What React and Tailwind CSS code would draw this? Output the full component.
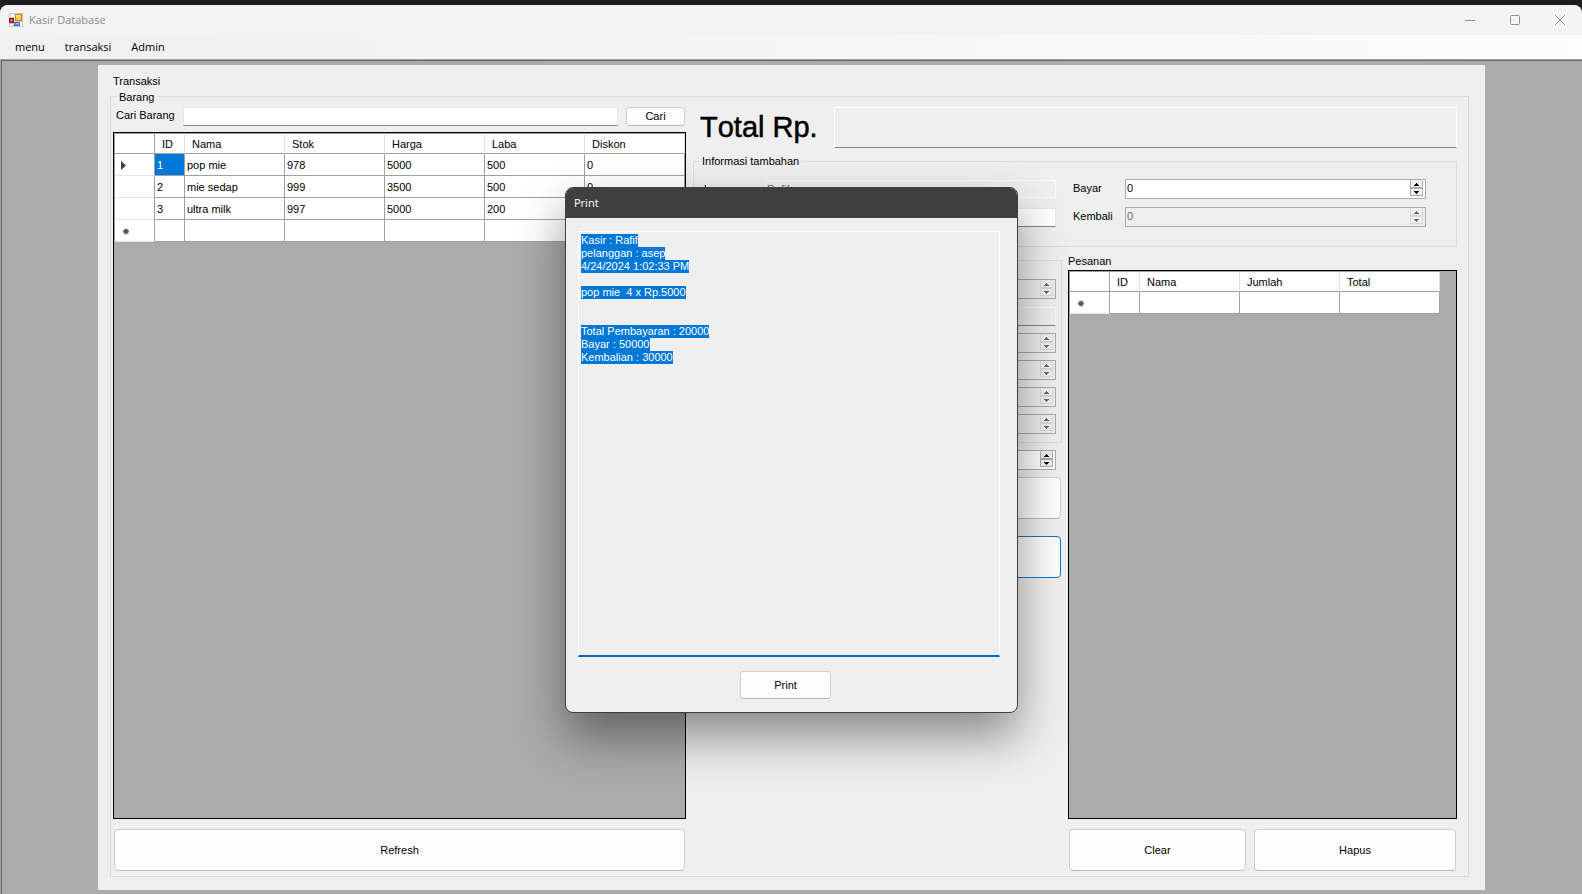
import React from "react";

const BARANG_COLUMNS = ["Nama", "Stok", "Harga", "Laba", "Diskon"];
const BARANG_ROWS = [
  ["1", "pop mie", "978", "5000", "500", "0"],
  ["2", "mie sedap", "999", "3500", "500", "0"],
  ["3", "ultra milk", "997", "5000", "200", "0"],
];
const PESANAN_COLUMNS = ["Nama", "Jumlah", "Total"];

const RECEIPT = [
  "Kasir : Rafif",
  "pelanggan : asep",
  "4/24/2024 1:02:33 PM",
  "",
  "pop mie  4 x Rp.5000",
  "",
  "",
  "Total Pembayaran : 20000",
  "Bayar : 50000",
  "Kembalian : 30000",
];

function AppIcon() {
  return (
    <svg className="size-[14px] shrink-0" viewBox="0 0 14 14" aria-hidden="true">
      <rect width="14" height="14" fill="#c4c4c4" />
      <rect x="1" y="1" width="4" height="3" fill="#fafafa" />
      <rect x="1" y="11" width="3" height="2" fill="#fafafa" />
      <rect x="5" y="1" width="1" height="12" fill="#e6e6e6" />
      <rect x="11" y="9" width="2" height="4" fill="#fafafa" />
      <rect x="6.5" y="1.5" width="6" height="6" fill="#f7cb3c" stroke="#c09010" />
      <rect x="7" y="2" width="4" height="2" fill="#fde487" />
      <rect x="0.5" y="5.5" width="4" height="4" fill="#d03030" stroke="#a01515" />
      <rect x="2" y="6" width="1" height="2" fill="#f0a0a0" />
      <rect x="5.5" y="9.5" width="5" height="3" fill="#5a94ea" stroke="#3f74cc" />
      <rect x="7" y="10" width="3" height="1" fill="#9cc0f5" />
    </svg>
  );
}

function Button({ children, className = "", focused = false }) {
  return (
    <button
      type="button"
      className={`rounded border bg-[#fdfdfd] text-center ${
        focused ? "border-[#0078d4]" : "border-[#d0d0d0] border-b-[#bababa]"
      } ${className}`}
    >
      {children}
    </button>
  );
}

function TextBox({ id, disabled = false, className = "", ...rest }) {
  return (
    <input
      id={id}
      type="text"
      disabled={disabled}
      className={`min-w-0 flex-1 border px-px outline-none ${
        disabled
          ? "border-[#f8f8f8] bg-[#efefef] text-[#6d6d6d]"
          : "border-[#e8e8e8] border-b-[#868686] bg-white"
      } ${className}`}
      {...rest}
    />
  );
}

function SpinButton({ up = false, disabled }) {
  return (
    <button
      type="button"
      tabIndex={-1}
      disabled={disabled}
      aria-label={up ? "Naik" : "Turun"}
      className={`flex flex-1 items-center justify-center border bg-[#f0f0f0] ${
        disabled ? "border-[#d9d9d9] text-[#6d6d6d]" : "border-[#ababab] text-black"
      } ${up ? "border-t-transparent" : ""}`}
    >
      <svg className="h-[3px] w-[5px]" viewBox="0 0 5 3" shapeRendering="crispEdges" aria-hidden="true">
        <path d={up ? "M2 0h1v1h1v1h1v1H0V2h1V1h1z" : "M0 0h5v1H4v1H3v1H2V2H1V1H0z"} fill="currentColor" />
      </svg>
    </button>
  );
}

function NumberBox({ id, disabled = false, value = "" }) {
  return (
    <div
      className={`flex h-5 min-w-0 flex-1 border border-[#ababab] ${disabled ? "bg-[#efefef]" : "bg-white"}`}
    >
      <input
        id={id}
        type="number"
        disabled={disabled}
        defaultValue={value}
        className={`min-w-0 flex-1 px-px pb-px outline-none [appearance:textfield] ${
          disabled ? "text-[#6d6d6d]" : "text-black"
        }`}
      />
      <div className={`flex w-4 flex-col border-r border-b p-px pt-0 ${disabled ? "border-[#efefef]" : "border-white"}`}>
        <SpinButton up disabled={disabled} />
        <SpinButton disabled={disabled} />
      </div>
    </div>
  );
}

function DataGrid({ label, columns, rows }) {
  return (
    <div className="min-h-0 flex-1 overflow-hidden border border-black bg-[#ababab]">
      <table
        aria-label={label}
        className="w-px table-fixed border-separate border-spacing-0 border-t border-l border-[#a0a0a0] bg-white text-left"
      >
        <thead>
          <tr className="h-5">
            <td className="w-10 min-w-10 border-r border-b border-[#a0a0a0] p-0" />
            <th className="w-[30px] border-r border-b border-[#a0a0a0] border-r-[#e3e3e3] p-0 pt-[2px] pl-[7px] font-normal">
              ID
            </th>
            {columns.map((name) => (
              <th
                key={name}
                className="w-[100px] border-r border-b border-[#a0a0a0] border-r-[#e3e3e3] p-0 pt-[2px] pl-[7px] font-normal"
              >
                {name}
              </th>
            ))}
          </tr>
        </thead>
        <tbody>
          {rows.map((row, r) => (
            <tr key={row[0]} className="h-[22px]">
              <td className="border-r border-b border-[#a0a0a0] border-b-[#e3e3e3] p-0 pt-[2px] pl-[6px]">
                {r === 0 && (
                  <svg className="h-[9px] w-[5px]" viewBox="0 0 5 9" aria-hidden="true">
                    <path d="M0 0l5 4.5L0 9z" fill="#404040" />
                  </svg>
                )}
              </td>
              {row.map((cell, c) => (
                <td
                  key={c}
                  className={`border-r border-b border-[#a0a0a0] p-0 pt-[2px] pl-[2px] ${
                    r === 0 && c === 0 ? "bg-[#0078d7] text-white" : ""
                  }`}
                >
                  {cell}
                </td>
              ))}
            </tr>
          ))}
          <tr className="h-[22px]">
            <td className="border-r border-b border-[#a0a0a0] border-b-[#e3e3e3] p-0 pt-[2px] pl-2">
              <svg className="h-[7px] w-[6px]" viewBox="0 0 6 7" aria-hidden="true">
                <circle cx="3" cy="3.5" r="2.7" fill="#8a8a8a" />
                <circle cx="3" cy="3.5" r="1.8" fill="#404040" />
                <path d="M3 0.5v6M0 3.5h6M1 1.5l4 4M5 1.5l-4 4" stroke="#606060" strokeWidth="0.8" />
              </svg>
            </td>
            <td className="border-r border-b border-[#a0a0a0] p-0" />
            {columns.map((name) => (
              <td key={name} className="border-r border-b border-[#a0a0a0] p-0" />
            ))}
          </tr>
        </tbody>
      </table>
    </div>
  );
}

function FormRow({ id, label, children }) {
  return (
    <div className="flex h-5 items-center">
      <label htmlFor={id} className="w-[61px] shrink-0">
        {label}
      </label>
      {children}
    </div>
  );
}

function TitleBar() {
  return (
    <header className="flex h-[30px] items-center bg-[#f3f3f3] pl-[9px] text-[#8c8c8c]">
      <AppIcon />
      <h1 className="ml-[6px] flex-1 pb-[2px] font-['Open_Sans',sans-serif] text-[11px]">Kasir Database</h1>
      <div className="flex">
        <button type="button" aria-label="Minimize" className="flex h-7 w-[45px] items-center justify-center">
          <svg className="size-[10px]" viewBox="0 0 10 10" aria-hidden="true">
            <path d="M0 5.5h10" stroke="currentColor" />
          </svg>
        </button>
        <button type="button" aria-label="Maximize" className="flex h-7 w-[45px] items-center justify-center">
          <svg className="size-[10px]" viewBox="0 0 10 10" fill="none" aria-hidden="true">
            <rect x="0.5" y="0.5" width="9" height="9" rx="1" stroke="currentColor" />
          </svg>
        </button>
        <button type="button" aria-label="Close" className="flex h-7 w-[45px] items-center justify-center">
          <svg className="size-[10px]" viewBox="0 0 10 10" aria-hidden="true">
            <path d="M0 0l10 10M10 0L0 10" stroke="currentColor" />
          </svg>
        </button>
      </div>
    </header>
  );
}

function PrintDialog() {
  return (
    <div className="absolute inset-0 flex items-start justify-center pt-[187px] pl-px">
      <div
        role="dialog"
        aria-labelledby="print-title"
        className="w-[453px] overflow-hidden rounded-lg border border-[#3f3f3f] bg-[#efefef] shadow-[0_24px_48px_rgba(0,0,0,0.42)]"
      >
        <h2
          id="print-title"
          className="h-[30px] bg-[#3f3f3f] pl-2 font-['Open_Sans',sans-serif] text-[11px] leading-[30px] text-white"
        >
          Print
        </h2>
        <div className="flex flex-col items-center px-3 pt-[13px] pb-[13px]">
          <div
            role="textbox"
            aria-label="Struk"
            aria-multiline="true"
            tabIndex={0}
            className="mr-[5px] h-[426px] self-stretch border border-b-2 border-white border-b-[#0067c0] pt-[2px] pl-[2px] whitespace-pre text-white outline-none"
          >
            {RECEIPT.map((line, i) => (
              <p key={i} className="h-[13px] leading-[13px]">
                <span className="inline-block bg-[#0078d7]">{line}</span>
              </p>
            ))}
          </div>
          <Button className="mt-[14px] mr-3 h-7 w-[91px]">Print</Button>
        </div>
      </div>
    </div>
  );
}

export default function App() {
  return (
    <div className="relative flex min-h-screen flex-col bg-[#1f1f1f] pt-[5px] font-['Liberation_Sans',Arial,sans-serif] text-[11px] leading-[13px] text-black">
      <div className="flex flex-1 flex-col overflow-hidden rounded-t-lg bg-[#ababab]">
        <TitleBar />
        <nav className="flex h-6 items-center gap-5 bg-linear-to-r from-[#f0f0f0] to-[#fcfcfc] pb-[2px] pl-[15px] font-['Open_Sans',sans-serif]">
          <a href="#menu">menu</a>
          <a href="#transaksi">transaksi</a>
          <a href="#admin">Admin</a>
        </nav>
        <div className="flex flex-1 border-t border-l border-[#a0a0a0]">
          <div className="flex flex-1 border-t border-l border-[#696969]">
            <main className="mt-1 mr-[97px] mb-1 ml-24 flex min-w-0 flex-1 flex-col bg-[#efefef] pt-[10px] pr-4 pb-[13px] pl-3">
              <h2 className="pb-px pl-[3px]">Transaksi</h2>
              <fieldset className="grid min-w-0 flex-1 grid-cols-[573fr_764fr] gap-[7px] border border-[#dcdcdc] pt-[3px] pr-[11px] pb-[5px] pl-[2px]">
                <legend className="ml-[4px] px-[2px] pt-[2px]">Barang</legend>

                <section className="flex min-w-0 flex-col">
                  <form className="mr-px mb-[6px] flex h-[19px] items-stretch gap-2">
                    <label htmlFor="cari" className="w-[62px] shrink-0 pt-[2px] pl-[3px] whitespace-nowrap">
                      Cari Barang
                    </label>
                    <TextBox id="cari" />
                    <Button className="w-[59px]">Cari</Button>
                  </form>
                  <DataGrid label="Barang" columns={BARANG_COLUMNS} rows={BARANG_ROWS} />
                  <Button className="mx-px mt-[10px] h-[42px]">Refresh</Button>
                </section>

                <section className="flex min-w-0 flex-col">
                  <div className="flex h-[41px] items-center">
                    <label
                      htmlFor="total"
                      className="w-[141px] pb-[2px] pl-[7px] text-[29px] leading-8 [-webkit-text-stroke:0.5px_black] [font-kerning:none]"
                    >
                      Total Rp.
                    </label>
                    <input
                      id="total"
                      type="text"
                      readOnly
                      className="h-full min-w-0 flex-1 border border-white border-b-[#868686] bg-[#efefef] px-2 text-[29px] outline-none"
                    />
                  </div>

                  <fieldset className="mt-[6px] flex min-w-0 border border-[#dcdcdc] pt-[10px] pr-[30px] pb-[19px] pl-[10px]">
                    <legend className="-ml-[4px] px-[2px] pt-px pb-px">Informasi tambahan</legend>
                    <div className="flex min-w-0 flex-1 flex-col gap-2">
                      <FormRow id="karyawan" label="karyawan">
                        <TextBox id="karyawan" disabled defaultValue="Rafif" className="h-[18px]" />
                      </FormRow>
                      <FormRow id="pelanggan" label="pelanggan">
                        <TextBox id="pelanggan" defaultValue="asep" className="h-[19px]" />
                      </FormRow>
                    </div>
                    <div className="ml-[17px] flex w-[353px] flex-col gap-2">
                      <div className="flex">
                        <label htmlFor="bayar" className="w-[52px] pt-[3px]">
                          Bayar
                        </label>
                        <NumberBox id="bayar" value="0" />
                      </div>
                      <div className="flex">
                        <label htmlFor="kembali" className="w-[52px] pt-[3px]">
                          Kembali
                        </label>
                        <NumberBox id="kembali" value="0" disabled />
                      </div>
                    </div>
                  </fieldset>

                  <div className="mt-[7px] grid flex-1 grid-cols-[369fr_389fr] gap-[6px]">
                    <div className="flex min-w-0 flex-col pt-[6px]">
                      <div className="flex flex-col gap-[7px] border border-[#dcdcdc] pt-[18px] pr-[5px] pb-2 pl-[10px]">
                        <FormRow id="id" label="ID">
                          <NumberBox id="id" disabled />
                        </FormRow>
                        <FormRow id="nama" label="Nama">
                          <TextBox id="nama" disabled className="h-[19px] border-b-[#868686]" />
                        </FormRow>
                        <FormRow id="stok" label="Stok">
                          <NumberBox id="stok" disabled />
                        </FormRow>
                        <FormRow id="harga" label="Harga">
                          <NumberBox id="harga" disabled />
                        </FormRow>
                        <FormRow id="laba" label="Laba">
                          <NumberBox id="laba" disabled />
                        </FormRow>
                        <FormRow id="diskon" label="Diskon">
                          <NumberBox id="diskon" disabled />
                        </FormRow>
                      </div>
                      <div className="mt-[7px] pr-[6px] pl-[11px]">
                        <FormRow id="jumlah" label="Jumlah">
                          <NumberBox id="jumlah" />
                        </FormRow>
                      </div>
                      <div className="mt-[7px] mr-px flex flex-col gap-[17px] pl-2">
                        <Button className="h-[42px]">Tambah</Button>
                        <Button className="h-[42px]" focused>
                          Print
                        </Button>
                      </div>
                    </div>

                    <div className="flex min-w-0 flex-col">
                      <h3 className="pt-px pb-[2px]">Pesanan</h3>
                      <DataGrid label="Pesanan" columns={PESANAN_COLUMNS} rows={[]} />
                      <div className="mx-px mt-[10px] grid h-[42px] grid-cols-[177fr_202fr] gap-2">
                        <Button>Clear</Button>
                        <Button>Hapus</Button>
                      </div>
                    </div>
                  </div>
                </section>
              </fieldset>
            </main>
          </div>
        </div>
      </div>
      <PrintDialog />
    </div>
  );
}
